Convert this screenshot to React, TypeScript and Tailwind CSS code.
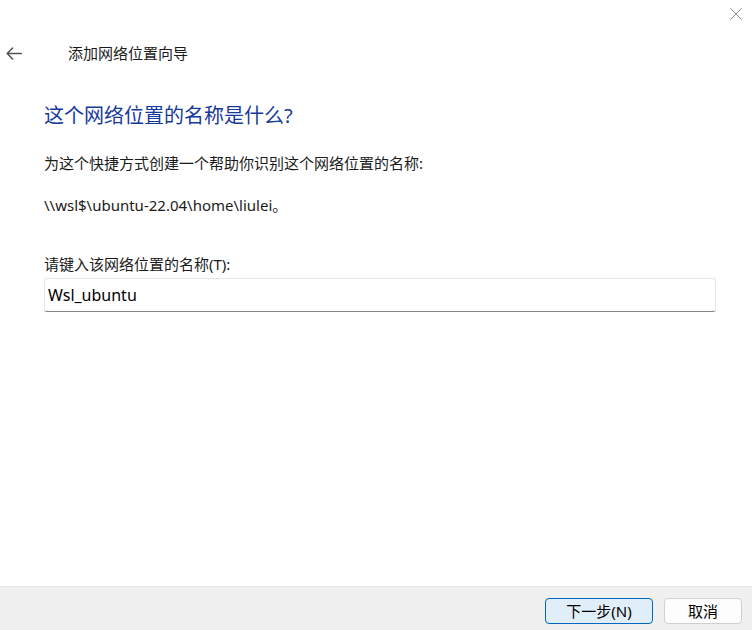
export default function App() {
  return (
    <div
      className="flex h-screen w-full flex-col bg-white text-[#1a1a1a]"
      style={{ fontFamily: '"Noto Sans", "Noto Sans CJK SC", sans-serif' }}
    >
      {/* title bar */}
      <div className="flex h-[28px] items-start justify-end pr-[10px] pt-[8px]">
        <svg width="12" height="12" viewBox="0 0 12 12" className="text-[#8a8a8a]">
          <path d="M0.5 0.5 L11.5 11.5 M11.5 0.5 L0.5 11.5" stroke="currentColor" strokeWidth="1" fill="none" />
        </svg>
      </div>

      {/* header */}
      <div className="flex h-[50px] items-center">
        <div className="flex w-[68px] items-center pl-[6px]">
          <svg width="16" height="13" viewBox="0 0 16 13" className="text-[#555555]">
            <path d="M15.3 6.5 H1.4 M6.6 1 L1.2 6.5 L6.6 12" stroke="currentColor" strokeWidth="1.6" fill="none" strokeLinecap="round" strokeLinejoin="round" />
          </svg>
        </div>
        <span className="text-[15px] leading-[20px]">添加网络位置向导</span>
      </div>

      {/* content */}
      <div className="flex flex-1 flex-col px-[44px]">
        <h1 className="mt-[24px] text-[20px] leading-[28px] text-[#163a9c]">这个网络位置的名称是什么?</h1>
        <p className="mt-[22px] text-[15px] leading-[22px]">为这个快捷方式创建一个帮助你识别这个网络位置的名称:</p>
        <p className="mt-[20px] text-[15px] leading-[22px]">\\wsl$\ubuntu-22.04\home\liulei。</p>
        <label className="mt-[37px] text-[15px] leading-[22px]">请键入该网络位置的名称(T):</label>
        <div className="mt-[3px] mr-[-8px] flex h-[34px] items-center rounded-[3px] border border-[#e5e5e5] border-b-[#858585] bg-white px-[3px]">
          <span className="text-[16px] leading-[22px] text-black">Wsl_ubuntu</span>
        </div>
      </div>

      {/* footer */}
      <div className="flex h-[44px] items-start justify-end gap-[11px] border-t border-[#e3e3e3] bg-[#f0f0f0] pr-[10px] pt-[11px]">
        <button className="flex h-[26px] w-[108px] items-center justify-center rounded-[4px] border border-[#0067c0] bg-[#e0eef9] text-[15px] text-black">
          下一步(N)
        </button>
        <button className="flex h-[26px] w-[78px] items-center justify-center rounded-[4px] border border-[#d0d0d0] bg-[#fdfdfd] text-[15px] text-black">
          取消
        </button>
      </div>
    </div>
  )
}
